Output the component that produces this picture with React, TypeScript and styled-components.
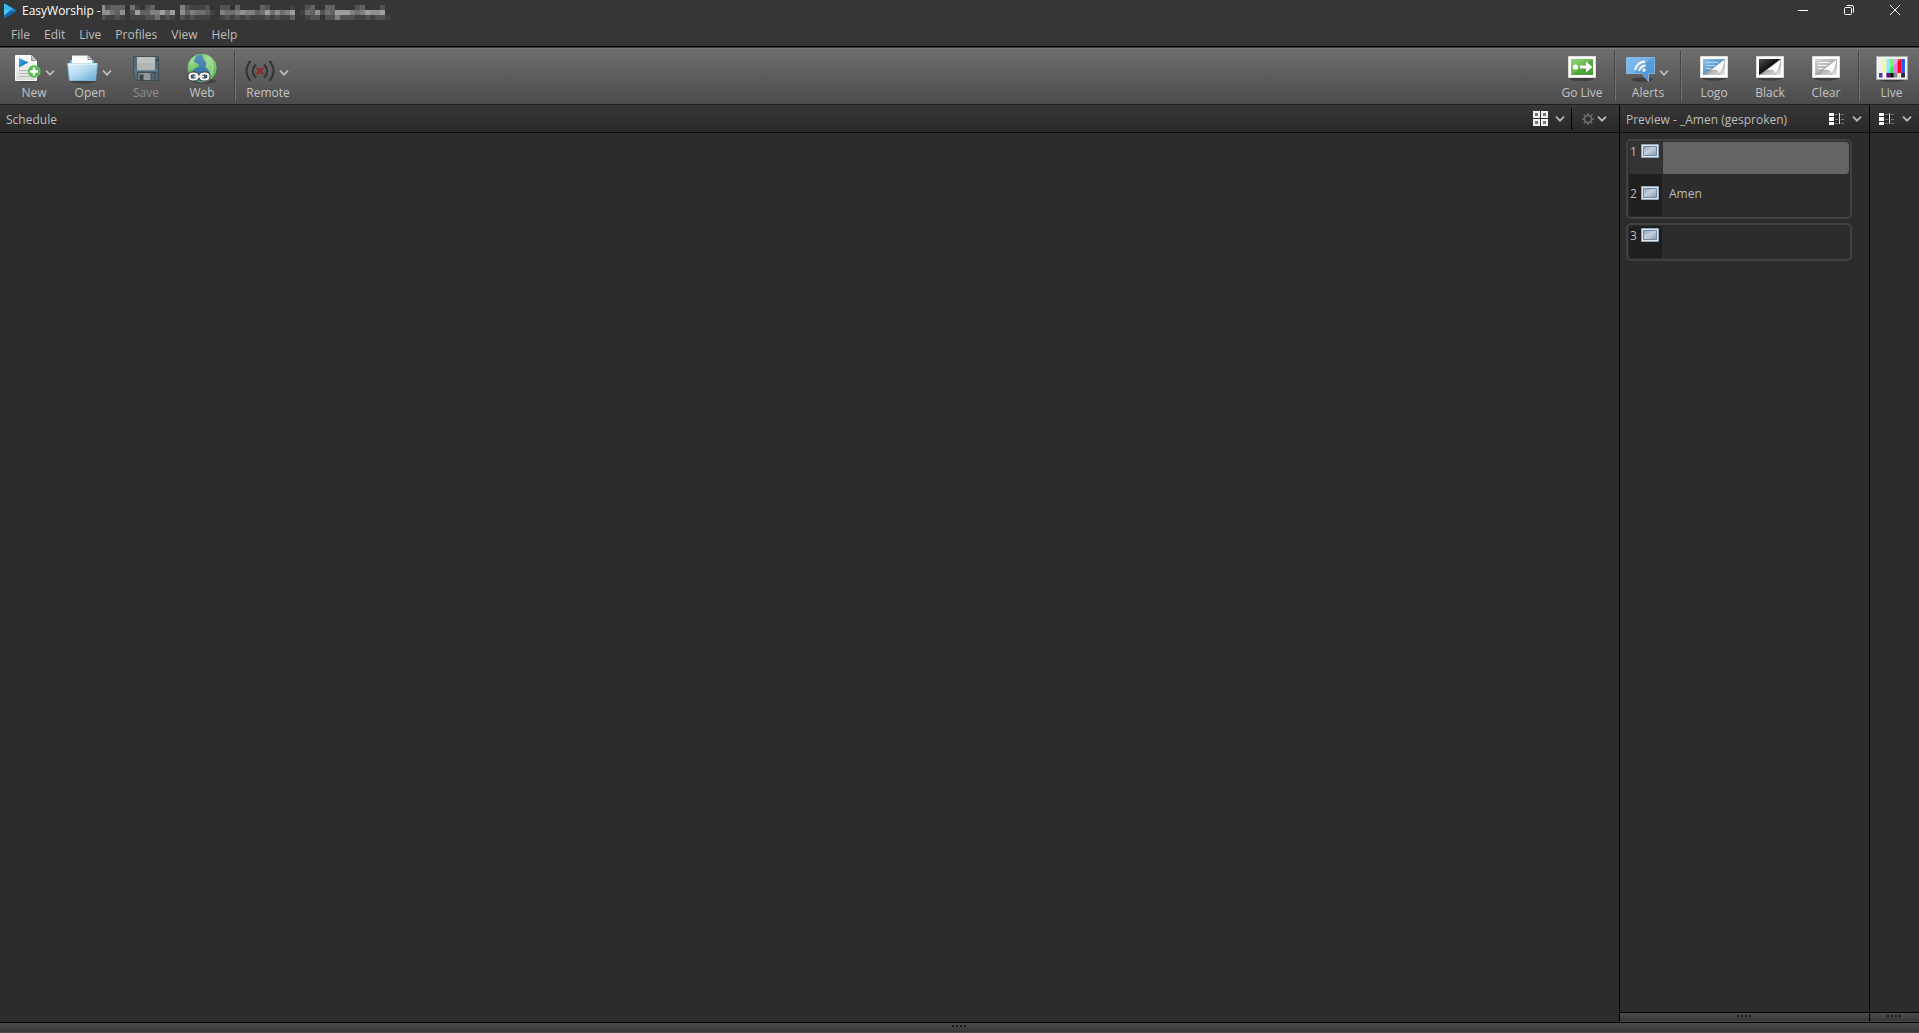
import React from "react";
import styled, { createGlobalStyle } from "styled-components";

const GlobalStyle = createGlobalStyle`
  *, *::before, *::after { box-sizing: border-box; }
  body {
    margin: 0;
    background: #2c2c2c;
    color: #bdbdbd;
    font: 12px/16px "Segoe UI", "Open Sans", "Noto Sans", sans-serif;
  }
  button { font: inherit; color: inherit; background: none; border: 0; padding: 0; }
  svg { display: block; flex: none; }
`;

const Shell = styled.div`
  display: flex;
  flex-direction: column;
  min-height: 100vh;
`;

const TopBar = styled.header`
  background: #363636;
  border-bottom: 1px solid #000;
`;

const TitleRow = styled.div`
  display: flex;
  align-items: center;
  height: 22px;
  padding-left: 3px;
`;

const Title = styled.h1`
  margin: 0 1px 0 5px;
  color: #fff;
  font-size: 12px;
  font-weight: 400;
  line-height: 22px;
  white-space: nowrap;
`;

const WindowButtons = styled.div`
  display: flex;
  align-self: flex-start;
  margin-left: auto;
  padding-right: 1px;
`;

const WindowButton = styled.button`
  display: flex;
  align-items: center;
  justify-content: center;
  width: 46px;
  height: 20px;
`;

const MenuBar = styled.nav`
  display: flex;
  gap: 14px;
  height: 24px;
  padding-left: 11px;
`;

const MenuItem = styled.button`
  height: 24px;
  padding-top: 2px;
  line-height: 22px;
`;

const Toolbar = styled.div`
  display: flex;
  align-items: center;
  height: 58px;
  padding-left: 6px;
  background: linear-gradient(#6e6e6e, #4c4c4c);
  border-top: 1px solid #3c3c3c;
  border-bottom: 1px solid #1c1c1c;
  box-shadow: inset 0 1px #7c7c7c;
`;

const Spacer = styled.div`
  flex: 1;
`;

const Tool = styled.button`
  display: flex;
  flex-direction: column;
  align-items: center;
  width: 56px;
  height: 56px;
  padding-top: 5px;
  color: ${(p) => (p.disabled ? "#8e8e8e" : "#c4c4c4")};

  &:last-child { width: 55px; }
`;

const ToolIcon = styled.span<{ $menu?: boolean }>`
  display: flex;
  align-items: center;
  gap: 4px;
  height: 32px;
  padding-right: ${(p) => (p.$menu ? "2px" : "0")};
`;

const ToolLabel = styled.span`
  line-height: 16px;
`;

const Chevron = styled.svg.attrs({ width: 10, height: 6, viewBox: "0 0 10 6", "aria-hidden": true })<{ $low?: boolean }>`
  margin-top: ${(p) => (p.$low ? "8px" : "0")};
  fill: none;
  stroke: #bcbcbc;
  stroke-width: 1.7;
`;

const Divider = styled.div`
  width: 2px;
  height: 50px;
  margin: 0 4px;
  background: #444;
  border-right: 1px solid #727272;
`;

const Workspace = styled.main`
  display: grid;
  grid-template-columns: minmax(0, 1fr) 250px 50px;
  flex: 1;
`;

const Pane = styled.section<{ $split?: boolean }>`
  display: flex;
  flex-direction: column;
  border-left: ${(p) => (p.$split ? "1px solid #000" : "0")};
`;

const PaneHeader = styled.div<{ $wide?: boolean }>`
  display: flex;
  align-items: center;
  height: 28px;
  padding: 0 ${(p) => (p.$wide ? "12px" : "7px")} 0 6px;
  background: linear-gradient(#373737, #292929);
  border-bottom: 1px solid #0c0c0c;
`;

const PaneTitle = styled.h2`
  margin: 0 auto 0 0;
  padding-top: 2px;
  font-size: 12px;
  font-weight: 400;
  line-height: 24px;
  white-space: nowrap;
`;

const HeaderTool = styled.button<{ $gap: number }>`
  display: flex;
  align-items: center;
  gap: ${(p) => p.$gap}px;
  height: 24px;
`;

const HeaderDivider = styled.div`
  width: 1px;
  height: 22px;
  margin: 0 10px 0 6px;
  background: #000;
`;

const PaneBody = styled.div`
  flex: 1;
  padding: 6px 17px 0 6px;
`;

const SlideGroup = styled.ol`
  margin: 0 0 4px;
  padding: 1px;
  list-style: none;
  border: 2px solid #414141;
  border-radius: 5px;
`;

const Slide = styled.li<{ $next?: boolean }>`
  display: flex;
  height: ${(p) => (p.$next ? "42px" : "32px")};
  border-radius: 3px;
  overflow: hidden;
`;

const SlideTag = styled.div<{ $selected?: boolean; $next?: boolean }>`
  display: flex;
  align-items: flex-start;
  justify-content: space-between;
  width: 33px;
  padding: ${(p) => (p.$next ? "12px" : "2px")} 3px 0 1px;
  background: ${(p) => (p.$selected ? "#343434" : "#1f1f1f")};
`;

const SlideText = styled.button<{ $selected?: boolean; $next?: boolean }>`
  display: flex;
  flex: 1;
  align-items: flex-start;
  margin-left: 1px;
  padding: ${(p) => (p.$next ? "12px" : "2px")} 6px 0;
  background: ${(p) => (p.$selected ? "#646464" : "transparent")};
  border-radius: 0 3px 3px 0;
`;

const Splitter = styled.div<{ $tall?: boolean }>`
  display: flex;
  justify-content: center;
  align-items: flex-start;
  gap: 2px;
  height: ${(p) => (p.$tall ? "11px" : "10px")};
  padding: 2px 1px 0 0;
  background: linear-gradient(#4c4c4c, #343434);
  border-top: 1px solid #000;
  box-shadow: inset 0 -1px #4a4a4a;
`;

const Dot = styled.i`
  width: 2px;
  height: 2px;
  background: #1a1a1a;
`;

const MosaicSvg = styled.svg`
  margin-top: 3px;
`;

/* Masked part of the window title: one hex digit per block, a space is blank. */
const mask = [
  "95666 743563    8544453 5536    65    4  56  66    56   5 ",
  "99769 5a6688a7a 9687764 877898867a7978a 4769576aaa878a99a",
  "54454 444557454 545444  454545444545446  45535585554454554",
];

const Mosaic = () => (
  <MosaicSvg width="290" height="15" viewBox="0 0 290 15" aria-hidden="true" shapeRendering="crispEdges">
    {mask.map((row, y) =>
      row.split("").map((c, i) =>
        c === " " ? null : (
          <rect
            key={y + "-" + i}
            x={i === 0 ? 0 : i * 5 - 2}
            y={y * 5}
            width={i === 0 ? 3 : 5}
            height="5"
            fill={`#${c}${c}${c}`}
            opacity={0.9}
          />
        )
      )
    )}
  </MosaicSvg>
);

const Down = ({ low }: { low?: boolean }) => (
  <Chevron $low={low}>
    <path d="M1 .7l4 4 4-4" />
  </Chevron>
);

const Grip = ({ tall }: { tall?: boolean }) => (
  <Splitter $tall={tall} role="separator">
    <Dot /><Dot /><Dot /><Dot />
  </Splitter>
);

const AppLogo = () => (
  <svg width="14" height="16" viewBox="0 0 14 16" aria-hidden="true">
    <path d="M1 1.500q0-1 1-.7L12.600 7q.9.700 0 1.400L2 14.800q-1 .3-1-.7z" fill="#1b8fd2" />
    <path d="M1 1.500q0-1 1-.7L10 5.400 5.500 9 1 6z" fill="#35b8ee" />
    <path d="M1 14.500V10l5-2 6.900-.4q.2.400-.3.800L2 14.800z" fill="#1567b0" />
    <path d="M1 6l5.500 2L1 12.500z" fill="#52c9f5" />
  </svg>
);

const NewIcon = () => (
  <svg width="30" height="30" viewBox="-4 0 30 30" aria-hidden="true">
    <defs>
      <linearGradient id="newPaper" x2="0" y2="1"><stop stopColor="#fff" /><stop offset="1" stopColor="#dcdcdc" /></linearGradient>
      <linearGradient id="newTri" x2="1" y2="1"><stop stopColor="#35b0f0" /><stop offset="1" stopColor="#0c63ad" /></linearGradient>
    </defs>
    <ellipse cx="13" cy="27.500" rx="11" ry="1.500" fill="#333" opacity=".4" />
    <path d="M.5 1.500h16l5 5v20H.5z" fill="url(#newPaper)" stroke="#f8f8f8" />
    <path d="M16.500 1.500v5h5" fill="#bbb" stroke="#888" strokeWidth=".8" />
    <path d="M4 16.500h9M4 19.500h9M4 22.500h11" stroke="#b5b5b5" />
    <path d="M4 4l9.500 4.500L4 13.500z" fill="url(#newTri)" />
    <circle cx="19" cy="17.500" r="6" fill="#52b64a" stroke="#7ed672" strokeWidth="1" />
    <path d="M19 13.500v8M15 17.500h8" stroke="#fff" strokeWidth="2.400" />
  </svg>
);

const OpenIcon = () => (
  <svg width="31" height="30" viewBox="0 0 31 30" aria-hidden="true">
    <defs>
      <linearGradient id="folder" x2="1" y2="1"><stop stopColor="#e2f2fb" /><stop offset=".5" stopColor="#b1d9ef" /><stop offset="1" stopColor="#62a9d8" /></linearGradient>
    </defs>
    <ellipse cx="16" cy="27" rx="13" ry="2.500" fill="#2a2a2a" opacity=".5" />
    <path d="M3 6h24v14H3z" fill="#75b6dc" />
    <path d="M5 1.500h16l4 4V20H5z" fill="#fafafa" />
    <path d="M21 1.500v4h4" fill="#ccc" stroke="#777" strokeWidth=".8" />
    <path d="M.6 9.500h29.800L28.500 26.500H2.500z" fill="url(#folder)" stroke="#8cc3e2" strokeWidth=".8" />
    <path d="M1 10h29" stroke="#f0f9fe" />
  </svg>
);

const SaveIcon = () => (
  <svg width="26" height="30" viewBox="0 0 26 30" aria-hidden="true">
    <path d="M.5 2.500h25v24H4.500l-4-4z" fill="#526875" stroke="#3f4d56" />
    <path d="M4 3h18v13H4z" fill="#b2b6b5" />
    <path d="M4 3h18v6H4z" fill="#bdc0c0" />
    <path d="M23 5h2v2h-2z" fill="#2f3a42" />
    <path d="M1 16h24v1H1z" fill="#6e8797" />
    <path d="M5 18.500h13v8H5z" fill="#939799" stroke="#414b52" />
    <path d="M6.500 20.500h4v6h-4z" fill="#3f4346" />
    <path d="M19 18.500h3v8" fill="none" stroke="#3d4a52" />
  </svg>
);

const WebIcon = () => (
  <svg width="30" height="30" viewBox="0 0 30 30" aria-hidden="true">
    <defs>
      <radialGradient id="globe" cx=".4" cy=".25" r=".8"><stop stopColor="#a9dd96" /><stop offset=".7" stopColor="#74c56c" /><stop offset="1" stopColor="#55a852" /></radialGradient>
      <linearGradient id="sea" x2="0" y2="1"><stop stopColor="#5795bf" /><stop offset="1" stopColor="#2c6698" /></linearGradient>
    </defs>
    <ellipse cx="17" cy="27" rx="12" ry="2.500" fill="#2a2a2a" opacity=".5" />
    <circle cx="15" cy="14" r="14" fill="url(#sea)" stroke="#74c56c" />
    <path d="M10 1.200C5 3 1.200 7 1 12.500q-.2 4 1.500 7l3-1q0-4 3.500-4.500 3-.5 3.500-3L8.500 8.500 6.500 7z" fill="url(#globe)" />
    <path d="M15 .2C23 .2 29.500 6 29.500 14c0 6-4 11-8 12.500l2-5.500-1.500-4-3.500-4 1-4-3-4z" fill="url(#globe)" />
    <path d="M20.500 3c3 2 5 6 5 11s-1 7-3 10" fill="none" stroke="#c0e7b5" opacity=".6" strokeWidth="1.200" />
    <g fill="none" stroke="#3a3a3a" strokeWidth="4.200">
      <rect x="2.500" y="19.500" width="8" height="6" rx="3" /><rect x="13.500" y="19.500" width="8" height="6" rx="3" />
    </g>
    <g fill="none" stroke="#f3f3f3" strokeWidth="2.200">
      <rect x="2.500" y="19.500" width="8" height="6" rx="3" /><rect x="13.500" y="19.500" width="8" height="6" rx="3" />
      <path d="M8 22.500h8" strokeLinecap="round" />
    </g>
  </svg>
);

const RemoteIcon = () => (
  <svg width="30" height="30" viewBox="0 0 30 30" aria-hidden="true">
    <g fill="none" stroke="#333" strokeWidth="2">
      <path d="M5.500 7q-8 9.500 0 20M24.500 7q8 9.500 0 20" />
      <path d="M11 10.500q-6.500 6.500 0 13M19 10.500q6.500 6.500 0 13" />
    </g>
    <path d="M11.800 13.800l6.500 6.500M18.300 13.800l-6.500 6.500" stroke="#882f33" strokeWidth="2.600" />
  </svg>
);

const GoLiveIcon = () => (
  <svg width="28" height="30" viewBox="0 0 28 30" aria-hidden="true">
    <defs><linearGradient id="go" x2="1" y2="1"><stop stopColor="#96d27c" /><stop offset=".5" stopColor="#69bb50" /><stop offset=".51" stopColor="#55a840" /><stop offset="1" stopColor="#489a38" /></linearGradient></defs>
    <ellipse cx="14" cy="25" rx="12" ry="2" fill="#222" opacity=".5" />
    <path d="M.5 2.500h27v21H.5z" fill="#fff" stroke="#ddd" />
    <path d="M3 5h22v16H3z" fill="url(#go)" />
    <circle cx="7.500" cy="13" r="2.600" fill="#fff" />
    <path d="M12 11.500h6V7.500l6.500 5.500-6.500 5.500v-4h-6z" fill="#fff" />
  </svg>
);

const AlertsIcon = () => (
  <svg width="29" height="30" viewBox="0 0 29 30" aria-hidden="true">
    <defs><linearGradient id="bubble" x2="1" y2="1"><stop stopColor="#86bef0" /><stop offset=".45" stopColor="#6fb0e8" /><stop offset=".47" stopColor="#589fdd" /><stop offset="1" stopColor="#4a8fd0" /></linearGradient></defs>
    <ellipse cx="16" cy="25.500" rx="11" ry="2" fill="#222" opacity=".5" />
    <path d="M.5 3.500h28v16h-6v8l-6.500-8H.5z" fill="url(#bubble)" stroke="#8dc3f2" strokeWidth=".8" />
    <g fill="none" stroke="#fff" strokeWidth="2">
      <path d="M9 16q2-8 10-8.500" /><path d="M13 17q1.500-5 6.500-5.500" />
    </g>
    <circle cx="18" cy="16" r="1.700" fill="#fff" />
  </svg>
);

const screenKinds = {
  logo: ["#8fc3ea", "#5a9bd0", "#b6dcf6"],
  black: ["#525252", "#0c0c0c", "#333333"],
  clear: ["#d4d4d4", "#b4b4b4", "#f5f5f5"],
};

const ScreenIcon = ({ kind }: { kind: keyof typeof screenKinds }) => {
  const [from, to, line] = screenKinds[kind];
  return (
    <svg width="28" height="30" viewBox="0 1 28 30" aria-hidden="true">
      <defs>
        <linearGradient id={kind} x2="1" y2="1"><stop stopColor={from} /><stop offset=".5" stopColor={to} /></linearGradient>
        <linearGradient id={kind + "Peel"} x1=".35" y1=".4" x2=".9" y2="1"><stop stopColor="#6c6c6c" /><stop offset=".4" stopColor="#b5b5b5" /><stop offset="1" stopColor="#e8e8e8" /></linearGradient>
      </defs>
      <ellipse cx="14" cy="25.500" rx="12" ry="2" fill="#222" opacity=".5" />
      <path d="M.5 3.500h27v21H.5z" fill="#fff" stroke="#ddd" />
      <path d="M3 6h22v16H3z" fill={`url(#${kind}Peel)`} />
      <path d="M3 6h22L3 22z" fill={`url(#${kind})`} />
      {kind !== "black" && <path d="M6 9.500h12M6 12.500h9M6 15.500h5" stroke={line} />}
      <path d="M25 6L9.500 18q5-1.500 7.500-.5t1.500 4.500Q24 16 25 6z" fill="#fff" stroke="#999" strokeWidth=".5" />
    </svg>
  );
};

const LiveIcon = () => (
  <svg width="32" height="30" viewBox="0 1 32 30" aria-hidden="true">
    <ellipse cx="16" cy="27" rx="12" ry="1.800" fill="#222" opacity=".5" />
    <path d="M.5 3.500h31v23H.5z" fill="#f2f2f2" stroke="#aaa" />
    {["#e8e8e8", "#f7f562", "#5fe6fa", "#35e84a", "#e27cf0", "#fb0812", "#2458f5"].map((c, i) => (
      <rect key={c} x={3 + i * 3.7} y="6" width="3.700" height="14" fill={c} />
    ))}
    {["#3e45a0", "#fff", "#770080", "#111", "#888", "#e5e5e5", "#222"].map((c, i) => (
      <rect key={c} x={3 + i * 3.7} y="20" width="3.700" height="4.500" fill={c} />
    ))}
    <path d="M3 6h22L9 20H3z" fill="#fff" opacity=".3" />
  </svg>
);

const GridIcon = () => (
  <svg width="16" height="16" viewBox="0 0 16 16" aria-hidden="true">
    {[[1, 1], [9, 1], [1, 9], [9, 9]].map(([x, y]) => (
      <rect key={x + "," + y} x={x} y={y} width="5" height="5" fill="#777" stroke="#f2f2f2" strokeWidth="2" />
    ))}
  </svg>
);

const GearIcon = () => (
  <svg width="12" height="12" viewBox="0 0 12 12" fill="none" stroke="#6c6c6c" aria-hidden="true">
    <circle cx="6" cy="6" r="3.500" strokeWidth="1.700" />
    <path d="M6 0v2M6 10v2M0 6h2M10 6h2M1.700 1.700l1.500 1.500M8.800 8.800l1.500 1.500M1.700 10.300l1.500-1.500M8.800 3.200l1.500-1.500" strokeWidth="1.700" />
  </svg>
);

const ListIcon = () => (
  <svg width="16" height="12" viewBox="0 0 16 12" aria-hidden="true" shapeRendering="crispEdges">
    <path d="M0 0h5v3H0zM0 4h5v4H0zM0 9h5v3H0z" fill="#fff" />
    <path d="M6 1.500h3M6 6.500h3M6 10.500h3M12 1.500h3M12 6.500h3M12 10.500h3" stroke="#777" />
    <path d="M10 0h1v11h-1z" fill="#e0e0e0" />
  </svg>
);

const ThumbIcon = () => (
  <svg width="18" height="14" viewBox="0 0 18 14" aria-hidden="true">
    <defs><linearGradient id="thumb" x2="1" y2="1"><stop stopColor="#8ea3b8" /><stop offset=".45" stopColor="#c4d0dc" /><stop offset="1" stopColor="#8599b0" /></linearGradient></defs>
    <path d="M.5.5h17v13H.5z" fill="#dfe7ee" stroke="#91a6b8" />
    <path d="M2.500 2.500h13v9h-13z" fill="url(#thumb)" stroke="#71879d" />
  </svg>
);

type SlideData = { n: number; text: string; selected?: boolean };
const slideGroups: SlideData[][] = [
  [{ n: 1, text: "", selected: true }, { n: 2, text: "Amen" }],
  [{ n: 3, text: "" }],
];

const menus = ["File", "Edit", "Live", "Profiles", "View", "Help"];

type ToolProps = { label: string; menu?: boolean; disabled?: boolean; children: React.ReactNode };
const ToolButton = ({ label, menu, disabled, children }: ToolProps) => (
  <Tool disabled={disabled}>
    <ToolIcon $menu={menu}>
      {children}
      {menu && <Down low />}
    </ToolIcon>
    <ToolLabel>{label}</ToolLabel>
  </Tool>
);

export default function App() {
  return (
    <Shell>
      <GlobalStyle />
      <TopBar>
        <TitleRow>
          <AppLogo />
          <Title>EasyWorship -</Title>
          <Mosaic />
          <WindowButtons>
            <WindowButton aria-label="Minimize">
              <svg width="10" height="10" viewBox="0 0 10 10"><path d="M0 5.500h10" stroke="#fff" /></svg>
            </WindowButton>
            <WindowButton aria-label="Restore">
              <svg width="10" height="10" viewBox="0 0 10 10" fill="none" stroke="#fff">
                <rect x=".5" y="2.500" width="7" height="7" rx="1" /><path d="M2.500.5H8q1.500 0 1.500 1.500v5.500" />
              </svg>
            </WindowButton>
            <WindowButton aria-label="Close">
              <svg width="10" height="10" viewBox="0 0 10 10"><path d="M0 0l10 10M10 0L0 10" stroke="#fff" /></svg>
            </WindowButton>
          </WindowButtons>
        </TitleRow>
        <MenuBar>
          {menus.map((m) => <MenuItem key={m}>{m}</MenuItem>)}
        </MenuBar>
      </TopBar>

      <Toolbar role="toolbar">
        <ToolButton label="New" menu><NewIcon /></ToolButton>
        <ToolButton label="Open" menu><OpenIcon /></ToolButton>
        <ToolButton label="Save" disabled><SaveIcon /></ToolButton>
        <ToolButton label="Web"><WebIcon /></ToolButton>
        <Divider />
        <ToolButton label="Remote" menu><RemoteIcon /></ToolButton>
        <Spacer />
        <ToolButton label="Go Live"><GoLiveIcon /></ToolButton>
        <Divider />
        <ToolButton label="Alerts" menu><AlertsIcon /></ToolButton>
        <Divider />
        <ToolButton label="Logo"><ScreenIcon kind="logo" /></ToolButton>
        <ToolButton label="Black"><ScreenIcon kind="black" /></ToolButton>
        <ToolButton label="Clear"><ScreenIcon kind="clear" /></ToolButton>
        <Divider />
        <ToolButton label="Live"><LiveIcon /></ToolButton>
      </Toolbar>

      <Workspace>
        <Pane>
          <PaneHeader $wide>
            <PaneTitle>Schedule</PaneTitle>
            <HeaderTool $gap={6} aria-label="Schedule view"><GridIcon /><Down /></HeaderTool>
            <HeaderDivider />
            <HeaderTool $gap={3} aria-label="Schedule options"><GearIcon /><Down /></HeaderTool>
          </PaneHeader>
          <PaneBody />
        </Pane>
        <Pane $split>
          <PaneHeader>
            <PaneTitle>Preview - _Amen (gesproken)</PaneTitle>
            <HeaderTool $gap={7} aria-label="Preview view"><ListIcon /><Down /></HeaderTool>
          </PaneHeader>
          <PaneBody>
            {slideGroups.map((group, g) => (
              <SlideGroup key={g}>
                {group.map(({ n, text, selected }, i) => (
                  <Slide key={n} $next={i > 0}>
                    <SlideTag $selected={selected} $next={i > 0}>{n}<ThumbIcon /></SlideTag>
                    <SlideText $selected={selected} $next={i > 0} aria-label={text ? undefined : `Slide ${n}`}>{text}</SlideText>
                  </Slide>
                ))}
              </SlideGroup>
            ))}
          </PaneBody>
          <Grip />
        </Pane>
        <Pane $split>
          <PaneHeader>
            <Spacer />
            <HeaderTool $gap={7} aria-label="Live view"><ListIcon /><Down /></HeaderTool>
          </PaneHeader>
          <PaneBody />
          <Grip />
        </Pane>
      </Workspace>
      <Grip tall />
    </Shell>
  );
}
